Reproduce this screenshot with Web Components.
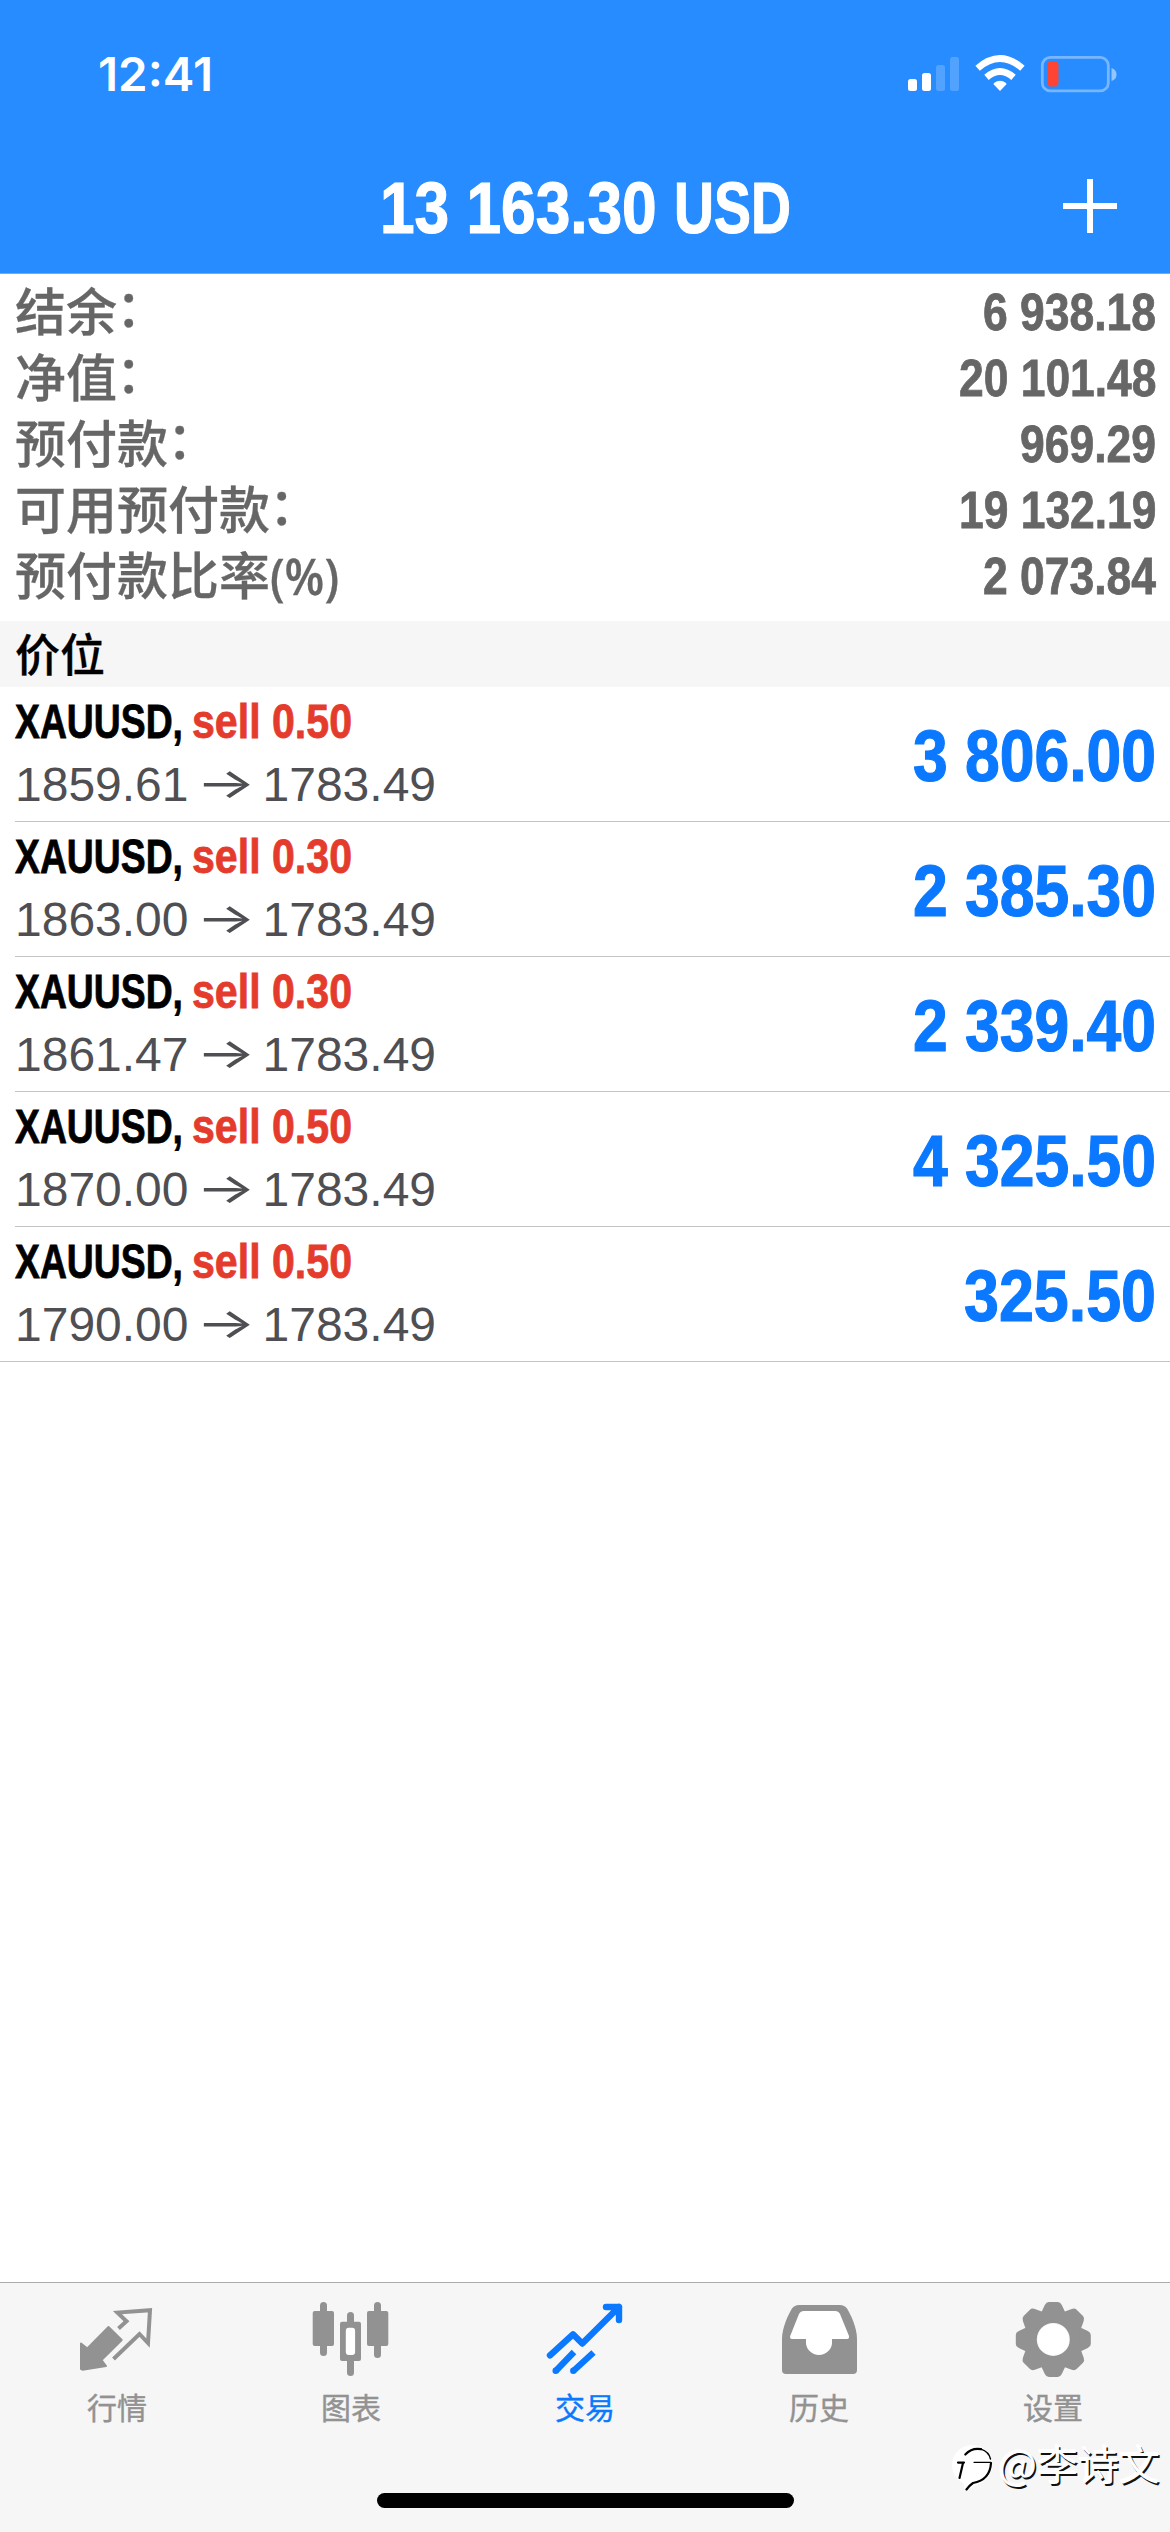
<!DOCTYPE html>
<html lang="zh-CN">
<head>
<meta charset="utf-8">
<title>交易</title>
<style>
  html, body { margin: 0; background: #fff; }
</style>
</head>
<body>
<trade-app></trade-app>
<script>
const SANS = '"Liberation Sans", "Noto Sans CJK SC", sans-serif';

class BaseElement extends HTMLElement {
  constructor() {
    super();
    this.attachShadow({ mode: 'open' });
  }
  connectedCallback() {
    this.shadowRoot.innerHTML = this.render();
    this.ready();
  }
  ready() {}
}

/* Text set in a condensed face, stretched to the advance width given in "w". */
customElements.define('fit-text', class extends BaseElement {
  render() {
    return `<style>
      :host { display: inline-block; white-space: nowrap; width: ${this.getAttribute('w')}px;
              font-family: var(--fit-font, "Liberation Sans Narrow", "Liberation Sans", sans-serif); }
      span { display: inline-block; transform-origin: 0 50%; }
    </style><span><slot></slot></span>`;
  }
  ready() {
    const span = this.shadowRoot.querySelector('span');
    const natural = span.getBoundingClientRect().width;
    if (natural) span.style.transform = `scaleX(${Number(this.getAttribute('w')) / natural})`;
  }
});

customElements.define('status-bar', class extends BaseElement {
  render() {
    return `<style>
      :host { display: flex; justify-content: space-between; align-items: center; height: 148px;
              padding: 0 52px 0 98px; box-sizing: border-box; color: #fff; }
      fit-text { --fit-font: Inter, sans-serif; font-size: 47px; font-weight: 600; line-height: 60px; }
      svg { display: block; }
    </style>
    <fit-text w="115">12:41</fit-text>
    <svg width="212" height="44" viewBox="905 52 212 44">
      <g fill="#fff">
        <rect x="907" y="79" width="9" height="12" rx="2.5"/>
        <rect x="921" y="73" width="9" height="18" rx="2.5"/>
        <g opacity=".2"><rect x="935" y="65" width="9" height="26" rx="2.5"/>
        <rect x="949" y="57" width="9" height="34" rx="2.5"/></g>
        <path d="M999 91L992.800 84.600Q992.200 83.800 993 83Q999 78.500 1005 83Q1005.800 83.800 1005.200 84.600Z"/>
      </g>
      <g fill="none" stroke="#fff">
        <path d="M985.500 77.300Q999 65.800 1012.500 77.300" stroke-width="6.800"/>
        <path d="M976.600 68.300Q999 48.800 1021.400 68.300" stroke-width="6.800"/>
      </g>
      <rect x="1041.300" y="57.300" width="66" height="33.600" rx="8" fill="none" stroke="#fff" stroke-opacity=".38" stroke-width="2.800"/>
      <path d="M1110.500 68Q1115.500 69.500 1115.500 74.500T1110.500 81Z" fill="#fff" fill-opacity=".5"/>
      <rect x="1046" y="61.500" width="11.500" height="25" rx="3.500" fill="#ff4433"/>
    </svg>`;
  }
});

customElements.define('nav-bar', class extends BaseElement {
  render() {
    return `<style>
      :host { display: grid; grid-template-columns: 1fr auto 1fr; align-items: center; height: 125px;
              color: #fff; font-weight: 700; font-size: 73px; line-height: 90px;
              padding: 0 53px 9px 54px; box-sizing: border-box; -webkit-text-stroke: 1.2px #fff; }
      div { display: flex; grid-column: 2; margin-top: 3px; }
      svg { display: block; justify-self: end; }
    </style>
    <div><slot></slot></div>
    <svg width="54" height="54" viewBox="0 0 54 54"><path d="M27 0V54M0 27H54" stroke="#fff" stroke-width="6"/></svg>`;
  }
});

customElements.define('summary-row', class extends BaseElement {
  render() {
    const v = this.getAttribute('value');
    return `<style>
      :host { display: flex; justify-content: space-between; align-items: baseline; height: 66px;
              line-height: 66px; color: #666; }
      .label { font-family: ${SANS}; font-size: 51px; font-weight: 500; white-space: nowrap;
               position: relative; top: 1px; -webkit-text-stroke: .3px #666; }
      .value { font-size: 52px; font-weight: 700; -webkit-text-stroke: .8px #666; margin-right: -1px; }
    </style>
    <span class="label"><slot></slot></span><fit-text class="value" w="${this.getAttribute('w')}">${v}</fit-text>`;
  }
});

/* Full-width colon set slightly higher than the font's own. */
customElements.define('label-colon', class extends BaseElement {
  render() {
    return `<style>:host { display: inline-block; transform: translate(-1px, -4px); }</style>：`;
  }
});

customElements.define('section-title', class extends BaseElement {
  render() {
    return `<style>
      :host { display: flex; align-items: center; height: 66px; padding: 0 15px 2px; box-sizing: border-box;
              background: #f6f6f6; font: 500 45px/64px "Noto Sans CJK SC", sans-serif; color: #000;
              -webkit-text-stroke: .3px #000; }
    </style><slot></slot>`;
  }
});

customElements.define('position-row', class extends BaseElement {
  render() {
    const a = n => this.getAttribute(n);
    return `<style>
      :host { display: flex; height: 135px; box-sizing: border-box; margin-left: 15px; padding-right: 14px;
              justify-content: space-between; border-bottom: 1px solid #c4c4c6; }
      :host(:last-of-type) { margin-left: 0; padding-left: 15px; }
      .info { display: flex; flex-direction: column; padding-top: 3px; }
      .line { display: flex; height: 63px; line-height: 63px; white-space: pre; }
      .deal { font-weight: 700; font-size: 49px; gap: 9px; color: #000; -webkit-text-stroke: .8px currentColor; }
      .side { color: #e43b2c; -webkit-text-stroke: .8px #e43b2c; }
      .price { font-family: ${SANS}; font-size: 48px; color: #4f4f53; gap: 7px; }
      .arrow { --fit-font: Inter, sans-serif; font-size: 42px; margin-top: -2px; }
      .profit { font-size: 73px; font-weight: 700; line-height: 138px; color: #0a78ff; -webkit-text-stroke: 1.2px #0a78ff; }
    </style>
    <div class="info">
      <div class="line deal"><fit-text w="168">XAUUSD,</fit-text><fit-text class="side" w="160">sell ${a('lots')}</fit-text></div>
      <div class="line price"><span>${a('open')}</span><fit-text class="arrow" w="60">→</fit-text><span>${a('price')}</span></div>
    </div>
    <fit-text class="profit" w="${a('w')}">${a('profit')}</fit-text>`;
  }
});

const TOOTH = [0, 45, 90, 135, 180, 225, 270, 315]
  .map(r => `<path transform="rotate(${r})" d="M-12.500 -26L-8.500 -34.500Q-7 -37.500 -4.500 -37.500H4.500Q7 -37.500 8.500 -34.500L12.500 -26Z"/>`).join('');

const ICONS = {
  quotes: `<path fill="currentColor" stroke="currentColor" stroke-width="2" stroke-linejoin="round" d="M4 43.500L10.300 48.500L31.500 27L44.700 40L24.500 60L29 66L5.500 69.700L4 69Z"/>
    <path fill="none" stroke="currentColor" stroke-width="4" d="M41.500 28.500L49.500 21.200L40.500 12.600L73 10.200L71 43L62.500 34L36.500 59"/>`,
  charts: `<g fill="currentColor"><rect x="1.700" y="11" width="21.300" height="35" rx="2"/><rect x="9" y="2" width="7" height="54" rx="3.500"/>
    <rect x="29" y="21.700" width="21" height="39.300" rx="2"/><rect x="36" y="12" width="7" height="64" rx="3.500"/>
    <rect x="56" y="11" width="21.300" height="35" rx="2"/><rect x="63" y="2" width="7" height="56" rx="3.500"/></g>
    <rect x="34.800" y="27.700" width="9.300" height="27.300" rx="3" fill="#fff"/>`,
  trade: `<g fill="none" stroke="currentColor" stroke-width="6.400" stroke-linejoin="round"><path stroke-linecap="round" d="M5 55.300L28 34.300L37.300 43.500L74 7M61 7H74V20"/>
    <path d="M10.700 71L29 52M28.300 71L48.500 52.500"/></g><g fill="currentColor"><path d="M66 7H74V15Z"/><circle cx="10.700" cy="70.800" r="3.200"/><circle cx="28.300" cy="70.800" r="3.200"/></g>`,
  history: `<path fill="currentColor" d="M3 70V39C3 28 9 15 13 8.500Q15.500 5 20 5H61Q65.500 5 68 8.500C72 15 78 28 78 39V70Q78 74 74 74H7Q3 74 3 70Z"/>
    <path fill="#fff" d="M11.200 36L20 14Q21.500 11 25 11H56Q59.500 11 61 14L70 36Q70.500 39 68 39H53V43C53 49 47 55 40 55S27 49 27 43V39H13Q10.500 39 11.200 36Z"/>`,
  settings: `<g fill="currentColor" transform="translate(40.300 39.400)"><circle r="23" fill="none" stroke="currentColor" stroke-width="13"/>${TOOTH}</g>
    <circle cx="40.300" cy="39.400" r="15.700" fill="#fff"/>`
};

customElements.define('tab-item', class extends BaseElement {
  render() {
    return `<style>
      :host { display: flex; flex: 1; flex-direction: column; align-items: center; padding-top: 17px; color: #929292; }
      :host([active]) { color: #0a78ff; }
      svg { display: block; }
      span { font: 400 30px/44px "Noto Sans CJK SC", sans-serif; margin: 4px 0 0; -webkit-text-stroke: .4px currentColor; }
    </style>
    <svg width="80" height="80" viewBox="0 0 80 80">${ICONS[this.getAttribute('icon')]}</svg>
    <span><slot></slot></span>`;
  }
});

customElements.define('tab-bar', class extends BaseElement {
  render() {
    return `<style>
      :host { display: flex; flex-direction: column; align-items: center; height: 250px; box-sizing: border-box;
              background: #f6f6f6; border-top: 1px solid #ababab; }
      nav { display: flex; width: 100%; height: 210px; }
      i { width: 417px; height: 15px; border-radius: 8px; background: #000; }
    </style><nav><slot></slot></nav><i></i>`;
  }
});

customElements.define('author-mark', class extends BaseElement {
  render() {
    return `<style>
      :host { position: absolute; right: 10px; bottom: 41px; display: flex; align-items: flex-start; gap: 4px;
              color: #fff; font: 400 41px/46px "Noto Sans CJK SC", sans-serif; white-space: nowrap;
              text-shadow: 1.500px 1.500px 0 #111, -1px -1px 0 #fff; }
      svg { display: block; }
      span { margin-top: -6px; }
    </style>
    <svg width="42" height="46" viewBox="0 0 42 46">
      <circle cx="20" cy="20" r="20" fill="#fff"/><path d="M10 32L13 46L30 37Z" fill="#fff"/>
      <g fill="none" stroke="#000" stroke-linecap="round">
        <path d="M13.300 9.500Q20 2.500 29 4.200" stroke-width="2.200"/>
        <path d="M6 17.600H12M11 18L7.500 33" stroke-width="2.200"/>
        <path d="M22 17.300H39" stroke-width="1.200"/>
        <path d="M39 18Q38 35 21 38Q18 40 14.500 44.500" stroke-width="2.200"/>
        <path d="M29 4.200Q37 7 38.500 14" stroke-width="1.400"/>
      </g>
    </svg><span><slot></slot></span>`;
  }
});

customElements.define('trade-app', class extends BaseElement {
  render() {
    return `<style>
      :host { position: relative; display: flex; flex-direction: column; width: 1170px; height: 2532px;
              background: #fff; overflow: hidden; font-family: ${SANS}; }
      header { background: #268cff; border-bottom: 1px solid #7eacdf; }
      .summary { display: flex; flex-direction: column; padding: 5px 15px 12px; }
      .unit { --fit-font: "Open Sans", sans-serif; font-weight: 600; line-height: 50px; }
      main { flex: 1; }
    </style>
    <header>
      <status-bar></status-bar>
      <nav-bar><fit-text w="294">13 163.30&nbsp;</fit-text><fit-text w="117">USD</fit-text></nav-bar>
    </header>
    <main>
      <div class="summary">
        <summary-row value="6 938.18" w="173">结余<label-colon></label-colon></summary-row>
        <summary-row value="20 101.48" w="197.500">净值<label-colon></label-colon></summary-row>
        <summary-row value="969.29" w="136">预付款<label-colon></label-colon></summary-row>
        <summary-row value="19 132.19" w="197.500">可用预付款<label-colon></label-colon></summary-row>
        <summary-row value="2 073.84" w="173">预付款比率<fit-text class="unit" w="69">(%)</fit-text></summary-row>
      </div>
      <section-title>价位</section-title>
      <div>
        <position-row lots="0.50" open="1859.61" price="1783.49" profit="3 806.00" w="243"></position-row>
        <position-row lots="0.30" open="1863.00" price="1783.49" profit="2 385.30" w="243"></position-row>
        <position-row lots="0.30" open="1861.47" price="1783.49" profit="2 339.40" w="243"></position-row>
        <position-row lots="0.50" open="1870.00" price="1783.49" profit="4 325.50" w="243"></position-row>
        <position-row lots="0.50" open="1790.00" price="1783.49" profit="325.50" w="192"></position-row>
      </div>
    </main>
    <tab-bar>
      <tab-item icon="quotes">行情</tab-item>
      <tab-item icon="charts">图表</tab-item>
      <tab-item icon="trade" active>交易</tab-item>
      <tab-item icon="history">历史</tab-item>
      <tab-item icon="settings">设置</tab-item>
    </tab-bar>
    <author-mark>@李诗文</author-mark>`;
  }
});
</script>
</body>
</html>
